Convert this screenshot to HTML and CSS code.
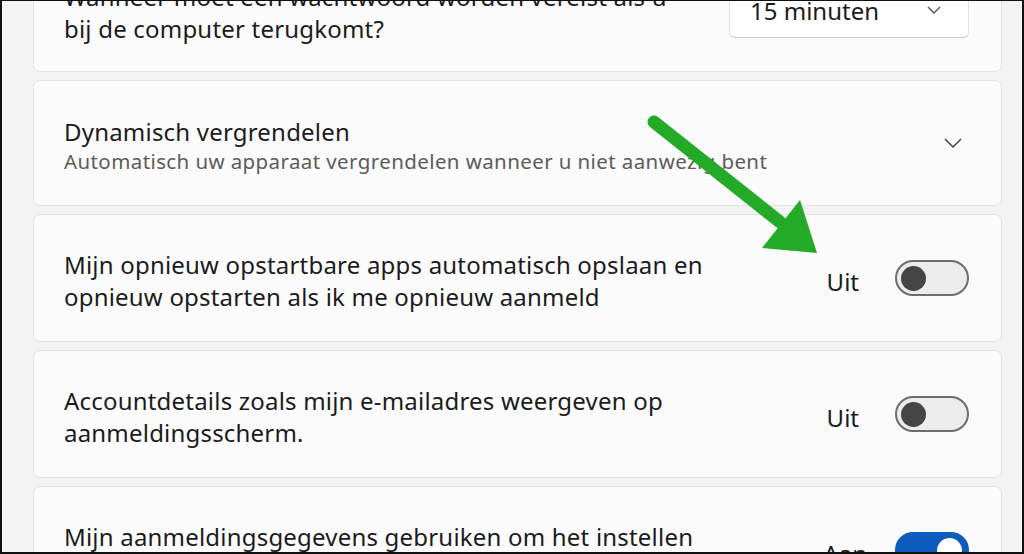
FILE: index.html
```html
<!DOCTYPE html>
<html lang="nl">
<head>
    <meta charset="UTF-8">
    <meta name="viewport" content="width=device-width, initial-scale=1.0">
    <title>Aanmeldingsopties</title>
    <link rel="stylesheet" href="styles.css">
</head>
<body>
<div class="frame">
    <div class="list">
        <!-- wachtwoord vereist -->
        <div class="card card-first">
            <div class="label">
                <div class="title">Wanneer moet een wachtwoord worden vereist als u<br>bij de computer terugkomt?</div>
            </div>
            <div class="dropdown">
                <span>15 minuten</span>
                <svg class="chev" width="16" height="10" viewBox="0 0 16 10"><path d="M2 2 L8 8 L14 2" fill="none" stroke="#555" stroke-width="1.4"/></svg>
            </div>
        </div>

        <!-- dynamisch vergrendelen -->
        <div class="card card-expand">
            <div class="label">
                <div class="title">Dynamisch vergrendelen</div>
                <div class="sub">Automatisch uw apparaat vergrendelen wanneer u niet aanwezig bent</div>
            </div>
            <svg class="chev-big" width="20" height="12" viewBox="0 0 20 12"><path d="M2 2 L10 10 L18 2" fill="none" stroke="#444" stroke-width="1.5"/></svg>
        </div>

        <div class="card">
            <div class="label">
                <div class="title">Mijn opnieuw opstartbare apps automatisch opslaan en<br>opnieuw opstarten als ik me opnieuw aanmeld</div>
            </div>
            <div class="state">Uit</div>
            <div class="toggle"><div class="knob"></div></div>
        </div>

        <div class="card">
            <div class="label">
                <div class="title">Accountdetails zoals mijn e-mailadres weergeven op<br>aanmeldingsscherm.</div>
            </div>
            <div class="state">Uit</div>
            <div class="toggle"><div class="knob"></div></div>
        </div>

        <div class="card">
            <div class="label">
                <div class="title">Mijn aanmeldingsgegevens gebruiken om het instellen<br>automatisch te voltooien na een update</div>
            </div>
            <div class="state state-on">Aan</div>
            <div class="toggle on"><div class="knob"></div></div>
        </div>
    </div>

    <!-- groene pijl -->
    <svg class="arrow" width="200" height="170" viewBox="0 0 200 170">
        <line x1="20" y1="12" x2="146" y2="112" stroke="#23ab28" stroke-width="13" stroke-linecap="round"/>
        <polygon points="128,138 166,90 183,143" fill="#23ab28"/>
    </svg>
</div>
</body>
</html>
```

FILE: styles.css
```css
/* Basic page styling */
body {
    margin: 0;
    font-family: "Noto Sans", "Open Sans", sans-serif;
    color: #1b1b1b;
}
.frame {
    position: relative;
    height: 554px;
    box-sizing: border-box;
    border: 2px solid #111;
    border-top-width: 1px;
    background: #f3f3f3;
    overflow: hidden;
}
.list {
    display: flex;
    flex-direction: column;
    gap: 8px;
    margin-top: -65px;
    padding-left: 31px;
    padding-right: 20px;
}
/* Card */
.card {
    display: flex;
    align-items: center;
    min-height: 128px;
    box-sizing: border-box;
    padding: 0 32px 0 30px;
    background: #fbfbfb;
    border: 1px solid #e3e3e3;
    border-radius: 7px;
}
.card-first {
    min-height: 136px;
    padding-top: 12px;
}
.card-expand {
    min-height: 126px;
}
.label {
    flex: 1;
    padding-top: 6px;
}
.title {
    font-size: 24px;
    line-height: 32px;
    letter-spacing: 0.2px;
}
.sub {
    font-size: 20.5px;
    line-height: 28px;
    letter-spacing: 0.4px;
    color: #5c5c5c;
}
.card-expand .title {
    line-height: 31px;
}
.card-expand .label {
    padding-top: 4px;
}
/* Dropdown */
.dropdown {
    display: flex;
    align-items: center;
    justify-content: space-between;
    width: 240px;
    height: 56px;
    box-sizing: border-box;
    padding: 0 26px 0 20px;
    background: #fff;
    border: 1px solid #e2e2e2;
    border-bottom-color: #c9c9c9;
    border-radius: 6px;
    font-size: 24px;
}
.chev-big {
    margin-right: 6px;
}
/* Toggle */
.state {
    font-size: 24px;
    margin-right: 36px;
    margin-top: 6px;
}
.state-on {
    margin-right: 28px;
}
.toggle {
    width: 74px;
    height: 36px;
    box-sizing: border-box;
    border: 2px solid #6d6d6d;
    border-radius: 18px;
    background: #ececec;
    display: flex;
    align-items: center;
    padding-left: 4px;
}
.knob {
    width: 25px;
    height: 25px;
    border-radius: 50%;
    background: #454545;
}
.toggle.on {
    background: #0b5cbc;
    border-color: #0b5cbc;
    justify-content: flex-end;
    padding-right: 5px;
}
.toggle.on .knob {
    background: #fff;
}
/* Arrow over the content */
.arrow {
    position: absolute;
    left: 632px;
    top: 109px;
}
```
